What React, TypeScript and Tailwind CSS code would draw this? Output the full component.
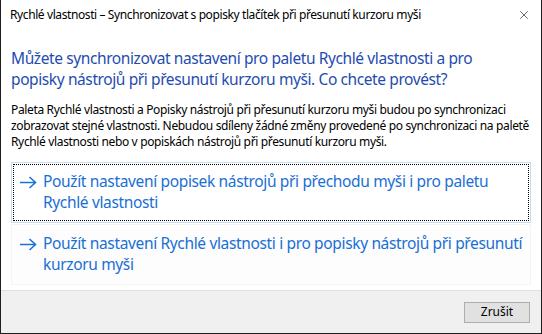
import { X } from "lucide-react";

const font = { fontFamily: '"Segoe UI", "Noto Sans", "Open Sans", sans-serif' };

const ArrowIcon = () => (
  <svg width="18" height="13" viewBox="0 0 18 13" className="shrink-0 mt-[5px]">
    <path d="M1 6.5 H16 M10.5 1 L16.5 6.5 L10.5 12" stroke="#1a73d9" strokeWidth="1.6" fill="none" />
  </svg>
);

interface CommandLinkProps {
  label: string;
  focused?: boolean;
}

const CommandLink = ({ label, focused }: CommandLinkProps) => (
  <div
    className={
      focused
        ? "border border-[#c6dcf1] bg-white p-[1px]"
        : "border border-[#f4f4f4] bg-[#fdfdfd] p-[1px]"
    }
  >
    <div
      className={
        focused
          ? "flex gap-[6px] pl-[5px] pt-[6px] pb-[7px] border border-dotted border-black"
          : "flex gap-[6px] pl-[5px] pt-[6px] pb-[7px] border border-transparent"
      }
    >
      <ArrowIcon />
      <span className="text-[15.5px] leading-[21px] tracking-[-0.35px] text-[#1a6fd4]">
        {label}
      </span>
    </div>
  </div>
);

export default function App() {
  return (
    <div
      className="w-[542px] h-[334px] flex flex-col bg-white border-x border-b border-[#1e1e1e] text-black"
      style={font}
    >
      <div className="h-[30px] flex items-center justify-between pl-[9px] pr-[10px]">
        <span className="text-[12px] tracking-[-0.4px]">
          Rychlé vlastnosti – Synchronizovat s popisky tlačítek při přesunutí kurzoru myši
        </span>
        <X size={14} strokeWidth={1} className="text-black" />
      </div>
      <div className="flex-1 flex flex-col px-[10px] pt-[18px]">
        <p className="w-[490px] text-[15.5px] leading-[21px] tracking-[-0.4px] text-[#1f4caf]">
          Můžete synchronizovat nastavení pro paletu Rychlé vlastnosti a pro popisky nástrojů při
          přesunutí kurzoru myši. Co chcete provést?
        </p>
        <p className="mt-[12px] text-[12px] leading-[16px] tracking-[-0.35px]">
          Paleta Rychlé vlastnosti a Popisky nástrojů při přesunutí kurzoru myši budou po
          synchronizaci zobrazovat stejné vlastnosti. Nebudou sdíleny žádné změny provedené po
          synchronizaci na paletě Rychlé vlastnosti nebo v popiskách nástrojů při přesunutí kurzoru
          myši.
        </p>
        <div className="mt-[12px] flex flex-col gap-[1px]">
          <CommandLink
            focused
            label="Použít nastavení popisek nástrojů při přechodu myši i pro paletu Rychlé vlastnosti"
          />
          <CommandLink label="Použít nastavení Rychlé vlastnosti i pro popisky nástrojů při přesunutí kurzoru myši" />
        </div>
      </div>
      <div className="h-[43px] bg-[#f0f0f0] border-t border-[#dfdfdf] flex items-center justify-end pr-[11px]">
        <button className="w-[66px] h-[21px] bg-[#e1e1e1] border border-[#adadad] text-[12px]">
          Zrušit
        </button>
      </div>
    </div>
  );
}
